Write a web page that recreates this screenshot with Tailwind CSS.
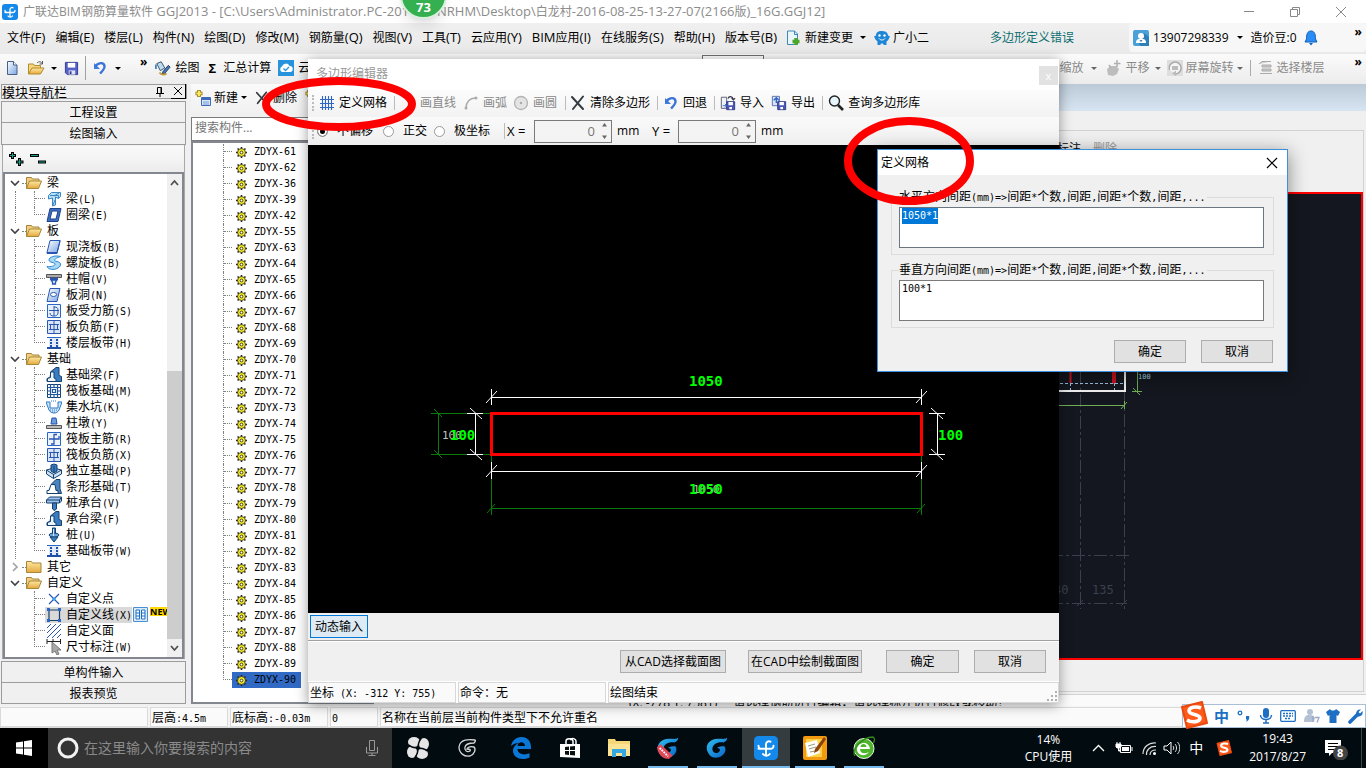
<!DOCTYPE html>
<html lang="zh-CN">
<head>
<meta charset="utf-8">
<title>广联达BIM钢筋算量软件 GGJ2013</title>
<script src="https://cdn.jsdelivr.net/npm/@tailwindcss/browser@4"></script>
</head>
<body class="h-screen overflow-hidden bg-[#f0f0f0] font-['Open_Sans','Noto_Sans_CJK_SC',sans-serif] text-[12px] leading-4 text-black">

<svg class="absolute size-0" aria-hidden="true">
  <defs>
    <linearGradient id="gb" x1="0" y1="0" x2="1" y2="1"><stop offset="0" stop-color="#fff"/><stop offset="1" stop-color="#7aa5e4"/></linearGradient>
    <linearGradient id="gf" x1="0" y1="0" x2="0" y2="1"><stop offset="0" stop-color="#ffe9a4"/><stop offset="1" stop-color="#e2a93c"/></linearGradient>
    <linearGradient id="gs" x1="0" y1="0" x2="1" y2="1"><stop offset="0" stop-color="#2fc0f0"/><stop offset="1" stop-color="#0a62c8"/></linearGradient>
  </defs>
  <symbol id="logo" viewBox="0 0 16 16"><rect width="16" height="16" rx="3" fill="#1489ea"/><path d="M8 13V5.500a2 2 0 0 1 3-1.700M3 8.500h8.500M3 6.500c0 2 1 2 2.500 2M13 6.500c0 2-1 2-2.500 2M6 12c1 1.500 3.500 1.500 4.500 0" stroke="#fff" stroke-width="1.300" fill="none" stroke-linecap="round"/></symbol>
  <symbol id="new" viewBox="0 0 16 16"><path d="M3.500 1.500h6l3.500 3.500v9.500h-9.500z" fill="url(#gb)" stroke="#4a5f86"/><path d="M9.500 1.500V5H13" fill="#fff" stroke="#4a5f86"/></symbol>
  <symbol id="open" viewBox="0 0 18 16"><path d="M1.500 14V4h5l1 1.500h6V8" fill="#f4d67c" stroke="#b58a2c"/><path d="M1.500 14L5 8h12l-3.500 6z" fill="url(#gf)" stroke="#b58a2c"/><path d="M10 3c2-2 4-1.500 5 .5M15.500 1v3h-3" fill="none" stroke="#555"/></symbol>
  <symbol id="save" viewBox="0 0 16 16"><path d="M1.500 1.500h13v13h-11l-2-2z" fill="#5561c4" stroke="#2e3890"/><path d="M4 2h8v5H4z" fill="#fff"/><path d="M5 10h7v4.500H5z" fill="#dfe3f5"/><path d="M6 11h2v3H6z" fill="#2e3890"/></symbol>
  <symbol id="undo" viewBox="0 0 16 16"><path d="M2 3v6h6" fill="#3f7be0"/><path d="M3 7c3-5 9-5 9.500-1 .4 3-2 5-4.500 7.500" fill="none" stroke="#3a74d8" stroke-width="2.400"/></symbol>
  <symbol id="pen" viewBox="0 0 18 18"><path d="M2 4l5-2 4 7-5 3z" fill="#b9dcf2" stroke="#345"/><path d="M1 5v5" stroke="#3a86c8" stroke-width="2"/><path d="M9 13l6-7 2 2-6 7-3 1z" fill="#3f78c8" stroke="#234"/><path d="M5 14c2 3 6 3 8 1" fill="none" stroke="#c49a3a" stroke-width="2"/></symbol>
  <symbol id="cloud" viewBox="0 0 16 16"><rect width="16" height="16" fill="#2793dc"/><path d="M4 12a3 3 0 0 1 0-5.500 4 4 0 0 1 7.500-.5A3 3 0 0 1 12 12z" fill="#fff"/><path d="M5.500 8.500l2 2 3.500-3.500" fill="none" stroke="#2793dc" stroke-width="1.300"/></symbol>
  <symbol id="doc" viewBox="0 0 16 16"><path d="M2.500 1h7l3 3v10.500h-10z" fill="#eaf5fc" stroke="#3b88b8"/><path d="M9.500 1v3.500h3" fill="none" stroke="#3b88b8"/><path d="M11 8v7M7.500 11.500h7" stroke="#49a52c" stroke-width="3.400"/></symbol>
  <symbol id="robot" viewBox="0 0 16 16"><path d="M8 1c5 0 6 3 6 4.500l2 1-1.500 3c-1 1.500-2 2-2 2V15h-2.500l-2-2-2 2H3.500v-3.500l-2-2L0 6.500l2-1C2 3 3.500 1 8 1z" fill="#1d86d6"/><circle cx="5.500" cy="5.500" r="1.200" fill="#fff"/><circle cx="10.500" cy="5.500" r="1.200" fill="#fff"/><path d="M5 8.500c1.500 2 4.500 2 6 0" stroke="#fff" fill="none"/></symbol>
  <symbol id="user" viewBox="0 0 16 16"><rect width="16" height="16" rx="2" fill="#4aa0d8"/><path d="M16 7l-5-4-5 11 2 2h8z" fill="#2f7fb8"/><circle cx="8" cy="6" r="3" fill="#fff"/><path d="M3 13c0-4 2-4 5-4s5 0 5 4z" fill="#fff"/><path d="M7 10l1 1.500 1-1.500" stroke="#2a6fa6" fill="none"/></symbol>
  <symbol id="bell" viewBox="0 0 14 16"><path d="M7 1c4 0 4.500 4 4.500 8l1.500 3H1l1.500-3C2.500 5 3 1 7 1z" fill="#2a8cf5" stroke="#1363b8"/><path d="M5 13h4l-2 2.500z" fill="#1363b8"/></symbol>
  <symbol id="addc" viewBox="0 0 16 16"><path d="M4 0v7M.5 3.500h7" stroke="#8c7a1e" stroke-width="3.600"/><path d="M4 .8v5.400M1.300 3.500h5.400" stroke="#ffe65c" stroke-width="2"/><path d="M6.500 7.500h9v8h-9z" fill="#dbe9fa" stroke="#3c6cb8"/><path d="M6.500 8h9v2h-9z" fill="#3c6cb8"/><path d="M8 12h6M8 14h6" stroke="#6c9ad8"/></symbol>
  <symbol id="del" viewBox="0 0 16 16"><path d="M2 2l11 12M13 1.500L3 14" stroke="#333a40" stroke-width="2" stroke-linecap="round"/></symbol>
  <symbol id="grid" viewBox="0 0 16 16"><path d="M3.500 1v14M6.500 1v14M9.500 1v14M12.500 1v14M1 4.500h14M1 8.500h14M1 12.500h14" stroke="#2f66c4" stroke-width="1.100" fill="none"/></symbol>
  <symbol id="arc" viewBox="0 0 16 16"><path d="M3 13C3 7 7 3 12 3" stroke="#aaa" stroke-width="1.500" fill="none"/><circle cx="3" cy="13" r="1.500" fill="#aaa"/><circle cx="13" cy="3" r="1.500" fill="#aaa"/></symbol>
  <symbol id="circ" viewBox="0 0 16 16"><circle cx="8" cy="8" r="6.500" fill="#e4e4e4" stroke="#b4b4b4" stroke-width="1.300"/><circle cx="8" cy="8" r="1.200" fill="#aaa"/></symbol>
  <symbol id="imp" viewBox="0 0 18 18"><path d="M1.500 2.500h6V15h-6z" fill="#eef3fb" stroke="#556"/><path d="M7.500 7.500h9v9h-9z" fill="#4a58b8" stroke="#2a3580"/><path d="M9.500 8h5v3.500h-5zM10.500 13.500h3V16h-3z" fill="#fff"/><path d="M9 4c1-3 5-3 6 1M13 3.500l2 2 2-2" stroke="#334" fill="none" stroke-width="1.300"/><path d="M3 12h4M5.500 10l2 2-2 2" stroke="#2f66c4" fill="none"/></symbol>
  <symbol id="exp" viewBox="0 0 18 18"><path d="M1.500 1.500h8V12h-8z" fill="#d8e4f8" stroke="#5668a8"/><path d="M7.500 7.500h9v9h-9z" fill="#4a58b8" stroke="#2a3580"/><path d="M9.500 8h5v3.500h-5zM10.500 13.500h3V16h-3z" fill="#fff"/><path d="M3 6l3-3 3 3M6 3v6" stroke="#2f66c4" fill="none" stroke-width="1.500"/></symbol>
  <symbol id="find" viewBox="0 0 16 16"><circle cx="6.500" cy="6" r="5" fill="#e6f6fc" stroke="#222" stroke-width="1.400"/><path d="M10 10l5 5" stroke="#222" stroke-width="2.600"/></symbol>
  <symbol id="hand" viewBox="0 0 16 16"><path d="M2 9l4-3h5l3 3-2 5-4 2-5-1z" fill="#bdbdbd"/><path d="M12 0v7M9 3.500h6.500M4 5l2 3" stroke="#b0b0b0" stroke-width="1.500"/></symbol>
  <symbol id="rot" viewBox="0 0 16 16"><rect width="16" height="16" fill="#dedede"/><path d="M2.500 10a6 6 0 1 1 6 4" stroke="#aaa" fill="#f4f4f4" stroke-width="1.500"/><path d="M9 10.500v5.500l-4-2.500zM5 6h6v4H5z" fill="#bbb"/></symbol>
  <symbol id="flr" viewBox="0 0 16 16"><path d="M1 4l3-2.500h9M4 5h9v2H4zM4 9h9v2H4zM2 13.500h12" stroke="#aaa" fill="#ccc"/></symbol>
  <symbol id="folder" viewBox="0 0 16 16"><path d="M.5 13.500V2.500h5l1 1.500h6.500v2" fill="#efd080" stroke="#a8853a"/><path d="M.5 13.500l3-7.500h12l-3 7.500z" fill="url(#gf)" stroke="#a8853a"/></symbol>
  <symbol id="folderc" viewBox="0 0 16 16"><path d="M.5 13.500V2.500h5l1 1.500h8.500v9.500z" fill="url(#gf)" stroke="#a8853a"/></symbol>
  <symbol id="t-beam" viewBox="0 0 16 16"><path d="M2.500 4.500l3-3h9v4l-2 2-3-1.500v8l-3 1v-8L2.500 8z" fill="#b8e0f6" stroke="#3a86c4"/><path d="M4 4.500h8.500v3M8 5l5-3M9 9l-2 5" stroke="#3a86c4" fill="none"/></symbol>
  <symbol id="t-ring" viewBox="0 0 16 16"><path d="M4 1.500h11l-3 13H1z" fill="#3a70c4" stroke="#1f3f88"/><path d="M6 4h6l-2 8H4z" fill="#fff" stroke="#1f3f88"/></symbol>
  <symbol id="t-slab" viewBox="0 0 16 16"><path d="M4 1.500h10l-3 12H1z" fill="url(#gb)" stroke="#2a56b0"/><path d="M14 1.500v1l-3 12H1v-1" stroke="#2a56b0" fill="none"/></symbol>
  <symbol id="t-spiral" viewBox="0 0 16 16"><path d="M14.500 1.500C9 0 3 2 3 5s6 2 6 4-4 3-8 2.500c1 3 7 4 11 1.500s3-6-1-6.500-3-3 3.500-5z" fill="#a8d8f6" stroke="#2f86d0"/></symbol>
  <symbol id="t-cap" viewBox="0 0 16 16"><path d="M.5 3.500h15v3H.5z" fill="#aaa" stroke="#555"/><path d="M4 7.500h8M5 9h6l-1.500 2v2h-3v-2z" fill="#d6e6fa" stroke="#2a56b0" stroke-width="1.300"/></symbol>
  <symbol id="t-hole" viewBox="0 0 16 16"><path d="M4 1.500h10l-3 13H1z" fill="url(#gb)" stroke="#2a56b0"/><ellipse cx="7.500" cy="7.500" rx="3" ry="2" fill="#fff" stroke="#2a56b0"/></symbol>
  <symbol id="t-bar1" viewBox="0 0 16 16"><path d="M1.500 1.500h13v13h-13z" fill="#e6effc" stroke="#2a66c4"/><path d="M8 3v10c-3 0-4-1-4-3M3 7.500h10M8 4c3 0 4 1 4 3v3c0 2-2 3-4 3" stroke="#2a56b0" fill="none"/></symbol>
  <symbol id="t-bar2" viewBox="0 0 16 16"><path d="M1.500 1.500h13v13h-13z" fill="#d8e6fa" stroke="#2a56b0"/><path d="M8 2v13M3 5.500h10M4.500 5v6M11.500 5v6M3 10.500h10" stroke="#2a56b0" fill="none"/></symbol>
  <symbol id="t-band" viewBox="0 0 16 16"><path d="M3 3h10v10H3z" fill="#e0ecfa"/><path d="M1 2.500h14" stroke="#2a66c4"/><path d="M1 13h14" stroke="#1f4fa8" stroke-width="2"/><path d="M5 4v8M11 4v8" stroke="#1f4fa8" stroke-width="2" stroke-dasharray="2 1"/></symbol>
  <symbol id="t-fbeam" viewBox="0 0 16 16"><path d="M1 14.500v-3l3-1 1-6 5-4h3v8l2.500 1v5z" fill="#3b7cc0" stroke="#14406e"/><path d="M1.500 14.500v-3l3-1V5H8v6l2 1v2.500z" fill="#eaf4fc" stroke="#14406e"/></symbol>
  <symbol id="t-raft" viewBox="0 0 16 16"><path d="M1.500 1.500h13v13h-13z" fill="#fff" stroke="#14406e"/><path d="M4.500 1v14M11.500 1v14M1 4.500h14M1 11.500h14M6.500 6.500h3v3h-3zM8 1v3M8 12v3M1 8h3M12 8h3" stroke="#1f56a0" fill="none" stroke-width="1.200"/></symbol>
  <symbol id="t-pit" viewBox="0 0 16 16"><path d="M0 3h4v6h8V3h4l-3 8c-2 4-8 4-10 0z" fill="#cfe6fa" stroke="#2a76c4"/><path d="M4 11h8M6 13h4M5 2h6" stroke="#2a76c4" stroke-dasharray="1 1"/></symbol>
  <symbol id="t-pier" viewBox="0 0 16 16"><path d="M5 9l1-6h4l1 6z" fill="#6b9ce0" stroke="#1f4fa8"/><path d="M.5 10.500h15v3H.5z" fill="#bbb" stroke="#555"/></symbol>
  <symbol id="t-main" viewBox="0 0 16 16"><path d="M1.500 1.500h13v13h-13z" fill="#eaf2fc" stroke="#2a66c4"/><path d="M8 3v10H5M3 8h10V5M8 3.500h3" stroke="#2a56b0" fill="none" stroke-width="1.300"/></symbol>
  <symbol id="t-ind" viewBox="0 0 16 16"><path d="M.5 7l7-2 8 2v4l-8 4.500L.5 11z" fill="#cfe2f6" stroke="#14406e"/><path d="M5 2l3-1 3 1v6l-3 2-3-2z" fill="#3b7cc0" stroke="#14406e"/><path d="M.5 7l7 4.500 8-4.500M7.500 11.500v4M8 3v6" fill="none" stroke="#14406e"/></symbol>
  <symbol id="t-strip" viewBox="0 0 16 16"><path d="M1 14.500l3-5h1l1-5 4-4h4v9l1.500 5z" fill="#4c84c0" stroke="#14406e"/><path d="M1 14.500v-3h2l2-6h4l1 6h2v3z" fill="#fff" stroke="#14406e"/></symbol>
  <symbol id="t-pcap" viewBox="0 0 16 16"><path d="M.5 5l3-3h12v4l-2 2H.5z" fill="#9cc4ec" stroke="#14406e"/><path d="M6.500 8h4v6l-2 1.500-2-1.500z" fill="#3b7cc0" stroke="#14406e"/><path d="M.5 5h13v3M13.500 5l2-3" fill="none" stroke="#14406e"/></symbol>
  <symbol id="t-pile" viewBox="0 0 16 16"><path d="M6.500 1h3v9H12l-4 5-4-5h2.500z" fill="#3b7cc0" stroke="#14406e"/><ellipse cx="8" cy="8" rx="5" ry="2" fill="#6ba4dc" stroke="#14406e"/><path d="M7.500 2v7" stroke="#cfe4fa"/></symbol>
  <symbol id="t-pt" viewBox="0 0 16 16"><path d="M3 3l10 10M13 3L3 13" stroke="#2a56b0" stroke-width="1.200"/><circle cx="8" cy="8" r="1.800" fill="#3fa0f0"/></symbol>
  <symbol id="t-line" viewBox="0 0 16 16"><path d="M3 3h10.500v10.500H3z" fill="none" stroke="#14406e" stroke-width="1.200"/><path d="M1 1h3v3H1zM12 1h3v3h-3zM1 12h3v3H1zM12 12h3v3h-3z" fill="#2a66c4"/></symbol>
  <symbol id="t-face" viewBox="0 0 16 16"><path d="M1 5l4-4M1 10l9-9M1 15L15 1M6 15l9-9M11 15l4-4" stroke="#2a56b0" fill="none"/></symbol>
  <symbol id="t-dim" viewBox="0 0 16 16"><path d="M1 0v5M14.500 0v5M1 2.500h13.500M7 0v3" stroke="#222"/><path d="M6 3v11l3-2 2 4 2-1-2-4h4z" fill="#aaa" stroke="#777"/></symbol>
  <symbol id="gear" viewBox="0 0 12 12"><path d="M6 0v12M0 6h12M1.700 1.700l8.600 8.600M10.300 1.700l-8.600 8.600" stroke="#222" stroke-width="1.700"/><circle cx="6" cy="6" r="4.300" fill="#f4ea20" stroke="#222" stroke-width=".8"/><circle cx="6" cy="6" r="1.500" fill="#fff" stroke="#222" stroke-width=".9"/></symbol>
  <symbol id="sogou" viewBox="0 0 28 28"><path d="M2 6l20-5 5 21-20 5z" fill="#ff5a1a" stroke="#e84a10" stroke-linejoin="round" stroke-width="2"/><path d="M21 7c-5-2-12-1-12 3s11 3 11 7-8 5-13 2" fill="none" stroke="#fff" stroke-width="3.600"/></symbol>
  <symbol id="gld" viewBox="0 0 26 26"><path d="M24 2c-3 2-5 1-8 1C8 2 1 7 2 14c1 7 7 11 13 9 6-2 9-8 6-12-3 0-6 0-8 2 2 0 4 1 3 3-2 4-8 3-8-2s6-8 12-7c3-1 4-3 4-5z" fill="url(#gs)"/></symbol>
</svg>

<div class="relative flex h-full flex-col overflow-hidden">

  <header class="flex h-[23px] shrink-0 items-center bg-white pl-[2px] text-[#8c8c8c]">
    <svg class="mr-[5px] size-4"><use href="#logo"/></svg>
    <span class="w-[414px] overflow-hidden whitespace-nowrap">广联达BIM钢筋算量软件<span class="text-[13px]"> GGJ2013 - [C:\Users\Administrator.PC-2014</span></span>
    <span class="whitespace-nowrap"><span class="text-[13px]">NRHM\Desktop\</span>白龙村<span class="text-[13px]">-2016-08-25-13-27-07(2166</span>版<span class="text-[13px]">)_16G.GGJ12]</span></span>
    <div class="ml-auto flex items-center gap-[34px] pr-[19px]">
      <button aria-label="最小化"><svg class="size-3" viewBox="0 0 12 12"><path d="M1 5.500h10" stroke="#888"/></svg></button>
      <button aria-label="还原"><svg class="size-3" viewBox="0 0 12 12"><path d="M1.500 3.500h7v7h-7zM3.500 3.500v-2h7v7h-2" fill="none" stroke="#888"/></svg></button>
      <button aria-label="关闭"><svg class="size-3" viewBox="0 0 12 12"><path d="M1 1l10 10M11 1L1 11" stroke="#888"/></svg></button>
    </div>
  </header>

  <nav class="flex h-[31px] shrink-0 items-center bg-linear-to-b from-[#f0f0f0] to-[#e9e9e9] pb-[2px] pl-[7px] whitespace-nowrap">
    <div id="menu" class="flex gap-[10px]"></div>
    <button class="ml-[8px] flex items-center gap-1"><svg class="size-4"><use href="#doc"/></svg>新建变更<span class="ml-[3px] border-x-[3px] border-t-[3px] border-x-transparent border-t-black"></span></button>
    <button class="ml-[8px] flex items-center gap-[3px]"><svg class="size-4"><use href="#robot"/></svg>广小二</button>
    <div class="ml-auto flex h-[29px] items-center">
      <span class="mr-[55px] text-[#0c6e70]">多边形定义错误</span>
      <div class="flex h-full items-center rounded bg-[#f7f7f7] pl-1">
        <svg class="size-4"><use href="#user"/></svg><span class="ml-1">13907298339</span>
        <span class="mx-2 border-x-[3px] border-t-[3px] border-x-transparent border-t-black"></span>
        <span>造价豆:0</span><svg class="ml-[7px] h-4 w-[14px]"><use href="#bell"/></svg>
        <span class="mr-1 ml-[37px] -mt-3 font-bold">»</span>
      </div>
    </div>
  </nav>

  <div class="flex h-[30px] shrink-0 items-center bg-linear-to-b from-[#fbfbfb] to-[#ececec] pb-[2px] pl-[4px] whitespace-nowrap">
    <button aria-label="新建"><svg class="size-4"><use href="#new"/></svg></button>
    <button aria-label="打开" class="ml-[7px] flex items-center gap-[6px]"><svg class="h-4 w-[18px]"><use href="#open"/></svg><span class="border-x-[3px] border-t-[3px] border-x-transparent border-t-black"></span></button>
    <button aria-label="保存" class="ml-[7px]"><svg class="size-[15px]"><use href="#save"/></svg></button>
    <span class="mx-[6px] h-6 w-px bg-[#a0a0a0]"></span>
    <button aria-label="撤销" class="flex items-center gap-[7px]"><svg class="size-4"><use href="#undo"/></svg><span class="border-x-[3px] border-t-[3px] border-x-transparent border-t-black"></span></button>
    <span class="ml-[19px] -mt-3 font-bold">»</span>
    <button class="ml-[8px] flex items-center gap-1"><svg class="size-4"><use href="#pen"/></svg>绘图</button>
    <button class="ml-[9px] flex items-center gap-[7px]"><b class="text-[13px]">Σ</b>汇总计算</button>
    <button class="ml-[7px] flex items-center gap-1"><svg class="size-4"><use href="#cloud"/></svg>云检查</button>
    <select aria-label="楼层" class="ml-[368px] h-[26px] w-[62px] appearance-none border border-[#707070] bg-white"></select>
    <span class="ml-auto"></span>
    <div class="flex items-center text-[#8a8a8a]">
      <button class="flex items-center gap-[7px]">缩放<span class="border-x-[3px] border-t-[3px] border-x-transparent border-t-[#666]"></span></button>
      <button class="ml-2 flex items-center gap-[5px]"><svg class="size-4"><use href="#hand"/></svg>平移<span class="border-x-[3px] border-t-[3px] border-x-transparent border-t-[#666]"></span></button>
      <button class="ml-[6px] flex items-center gap-[3px]"><svg class="size-4"><use href="#rot"/></svg>屏幕旋转<span class="border-x-[3px] border-t-[3px] border-x-transparent border-t-[#666]"></span></button>
      <span class="mx-[7px] h-4 w-px bg-[#aaa]"></span>
      <button class="flex items-center gap-[3px]"><svg class="size-4"><use href="#flr"/></svg>选择楼层</button>
      <span class="mr-1 ml-[30px] -mt-3 font-bold text-black">»</span>
    </div>
  </div>

  <main class="flex min-h-0 flex-1">
    <aside class="flex w-[187px] shrink-0 flex-col pb-[2px]">
      <div class="ml-px flex h-[15px] items-center border border-[#9a9a9a] text-[13px]">
        <h2>模块导航栏</h2>
        <button aria-label="固定" class="ml-auto"><svg class="size-[10px]" viewBox="0 0 10 10"><path d="M2.500 6V.5h4V6M6 1v5M1 6.500h8M5 7v3" stroke="#000" fill="none"/></svg></button>
        <button aria-label="关闭" class="ml-[6px] border-r border-b border-black p-[2px]"><svg class="size-[10px]" viewBox="0 0 10 10"><path d="M1 1l8 8M9 1L1 9" stroke="#000"/></svg></button>
      </div>
      <button class="mt-[2px] ml-px h-[22px] w-[185px] border border-[#9c9c9c] pt-px">工程设置</button>
      <button class="-mt-px ml-px h-[23px] w-[185px] border border-[#9c9c9c]">绘图输入</button>
      <div class="ml-[2px] flex min-h-0 w-[183px] flex-1 flex-col border-x border-[#a8a8a8]">
        <div class="mt-px flex h-[26px] items-center gap-[6px] bg-linear-to-b from-[#fafafa] to-[#ececec] pl-[5px]">
          <button aria-label="展开"><svg class="size-4" viewBox="0 0 16 16"><path d="M4.500 1v7M1 4.500h7M11.500 7v8M8 11h7.500" stroke="#000" stroke-width="3"/><path d="M4.500 2v5M2 4.500h5M11.500 8v6M9 11h5.500" stroke="#18a090"/></svg></button>
          <button aria-label="折叠"><svg class="size-4" viewBox="0 0 16 16"><path d="M0 4.500h9M8 11h8" stroke="#000" stroke-width="3"/><path d="M1 4.500h7M9 11h6" stroke="#18a090"/></svg></button>
        </div>
        <div class="flex min-h-0 flex-1 border-2 border-[#828790] bg-white">
          <ul id="tree" class="min-w-0 flex-1 overflow-hidden pt-px whitespace-nowrap"></ul>
          <div class="flex w-[15px] flex-col items-center bg-[#f0f0f0]">
            <svg class="mt-[5px] h-2 w-[9px]" viewBox="0 0 9 8"><path d="M1 6l3.500-4L8 6" fill="none" stroke="#505050" stroke-width="1.800"/></svg>
            <div class="mt-[184px] w-full flex-1 bg-[#cdcdcd]"></div>
            <svg class="my-[5px] h-2 w-[9px]" viewBox="0 0 9 8"><path d="M1 2l3.500 4L8 2" fill="none" stroke="#505050" stroke-width="1.800"/></svg>
          </div>
        </div>
      </div>
      <button class="mt-[2px] ml-px h-[22px] w-[185px] border border-[#9c9c9c] pt-px">单构件输入</button>
      <button class="-mt-px ml-px h-[22px] w-[185px] border border-[#9c9c9c] pt-px">报表预览</button>
    </aside>

    <section class="ml-1 flex w-[183px] shrink-0 flex-col pb-[2px]">
      <div class="flex h-[31px] items-center bg-linear-to-b from-[#fafafa] to-[#f0f0f0] pb-1 pl-1 whitespace-nowrap">
        <button class="flex items-center gap-[3px]"><svg class="size-4"><use href="#addc"/></svg>新建<span class="border-x-[3px] border-t-[3px] border-x-transparent border-t-black"></span></button>
        <button class="ml-[8px] flex items-center gap-[4px]"><svg class="size-[14px]"><use href="#del"/></svg>删除</button>
        <button class="ml-2 flex items-center gap-1"><svg class="size-4"><use href="#addc"/></svg>复制</button>
      </div>
      <input aria-label="搜索构件" placeholder="搜索构件..." class="mt-[2px] h-6 w-full border border-[#7a7a7a] bg-white pb-1 pl-[3px] placeholder:text-[#757575]">
      <ul id="list" class="min-h-0 flex-1 border-2 border-[#828790] bg-white pt-px whitespace-nowrap"></ul>
    </section>

    <section class="flex min-w-0 flex-1 flex-col">
      <div class="h-[29px] bg-linear-to-b from-[#bccad8] to-[#d7e4f1]"></div>
      <div class="h-[20px]"></div>
      <div class="mr-[2px] flex flex-1 flex-col border border-[#d2d2d2]">
        <div class="flex h-[61px] items-start gap-3 pt-[10px] pl-[682px]"><span>标注</span><span class="text-[#999]">删除</span></div>
        <div class="min-h-0 flex-1 overflow-hidden border-2 border-l-0 border-[#f00] bg-[#14171f]">
          <svg class="h-[464px] w-[990px]" viewBox="375 194 990 464">
            <g stroke="#3a414d" fill="none" stroke-dasharray="13 3 3 3"><path d="M1080.500 372v237M1124.500 392v217M1050 555.500h79M1050 603.500h77"/></g>
            <path d="M1077 606l6-6M1121 606l6-6" stroke="#3a414d"/>
            <path d="M1070.500 372v11" stroke="#d01820" stroke-width="2"/><path d="M1112 372h4v12h-4z" fill="#c8141c"/>
            <path d="M1050 383.500h74M1070.500 383v8M1114.500 383v8" stroke="#9cc0e4" stroke-dasharray="3 2" fill="none"/>
            <path d="M1050 391h75V372" stroke="#f0f0f0" stroke-width="2" fill="none"/>
            <path d="M1137.500 372v20M1132 391.500h10M1133 388l7 7M1050 405.500h74M1124.500 401v8M1121 409l6-7" stroke="#6fae54" fill="none"/>
            <g class="font-['DejaVu_Sans_Mono',monospace]"><text x="1138" y="379" font-size="7" fill="#a8d8e4">100</text>
            <text x="1092" y="594" font-size="12" fill="#3a414d">135</text><text x="1054" y="594" font-size="12" fill="#3a414d">40</text></g>
          </svg>
        </div>
        <div class="h-[31px]"></div>
      </div>
      <div class="mt-[2px] flex h-[13px] items-start gap-4 overflow-hidden border-t border-[#d2d2d2] bg-[#fafafa] pl-[255px] whitespace-nowrap"><span>(X: -778 Y: 7581)</span><span>请选择钢筋进行编辑；请选择标注进行修改或移动！</span></div>
    </section>
  </main>

  <footer class="flex h-[22px] shrink-0 items-center gap-[2px] border-b border-[#d8d8d8] bg-[#f4f4f4] whitespace-nowrap *:h-[20px] *:border *:border-[#dadada] *:bg-[#fafafa] *:px-px *:pt-[2px]">
    <div class="w-[148px]"></div>
    <div class="w-[78px]">层高<span class="font-['DejaVu_Sans_Mono',monospace] text-[10px]">:4.5m</span></div>
    <div class="w-[98px]">底标高<span class="font-['DejaVu_Sans_Mono',monospace] text-[10px]">:-0.03m</span></div>
    <div class="w-[48px]"><span class="font-['DejaVu_Sans_Mono',monospace] text-[10px]">0</span></div>
    <div class="flex-1">名称在当前层当前构件类型下不允许重名</div>
  </footer>

  <div class="flex h-10 shrink-0 bg-[#020b0f] text-white">
    <button aria-label="开始" class="flex w-12 items-center justify-center bg-black"><svg class="size-4" viewBox="0 0 16 16"><path d="M0 2.500l7-1v6H0zM8 1.300L16 0v7.500H8zM0 8.500h7v6l-7-1zM8 8.500h8V16l-8-1.300z" fill="#fff"/></svg></button>
    <label class="flex w-[344px] items-center bg-[#333] pl-2">
      <svg class="size-6" viewBox="0 0 24 24"><circle cx="12" cy="12" r="9" fill="none" stroke="#f2f2f2" stroke-width="3"/></svg>
      <input aria-label="搜索" placeholder="在这里输入你要搜索的内容" class="ml-1 min-w-0 flex-1 bg-transparent text-[14px] placeholder:text-[#8a8a8a]">
      <svg class="mr-[13px] h-[18px] w-[14px]" viewBox="0 0 14 18"><path d="M4.500 1.500h5v10h-5zM1.500 8v6h11V8M7 14v3M3.500 16.500h7" fill="none" stroke="#999"/></svg>
    </label>
    <div class="flex *:relative *:flex *:h-10 *:items-center *:justify-center">
      <button aria-label="应用" class="ml-[2px] w-12"><svg class="size-6" viewBox="0 0 24 24"><g fill="#e6e6e6"><ellipse cx="8" cy="6" rx="6" ry="5"/><ellipse cx="18" cy="8" rx="5" ry="6"/><ellipse cx="16" cy="18" rx="6" ry="5"/><ellipse cx="6" cy="16" rx="5" ry="6"/></g><path d="M12 12C8 12 5 11 3 9M12 12c0-4 1-7 3-9M12 12c4 0 7 1 9 3M12 12c0 4-1 7-3 9" stroke="#020b0f" stroke-width="1.500" fill="none"/></svg></button>
      <button aria-label="螺旋" class="w-[50px]"><svg class="size-5" viewBox="0 0 20 20"><path d="M18 2c-6-1-15-1-16 7 0 6 5 10 11 9 5-2 6-7 4-9-4-1-6 0-7 2 3 0 4 1 3 2-3 2-6-1-5-4 1-4 6-4 9-4 1-1 2-2 1-3z" fill="none" stroke="#d6d6d6" stroke-width="1.300"/></svg></button>
      <button aria-label="Edge" class="w-[58px]"><svg class="size-[22px]" viewBox="0 0 22 22"><path d="M1 9C2 3 7 0 11.500 0 18 0 21.500 5 21 12H7.500c0 5 7 7 12 4v4.500C12 24 3 21 3 14c0-4 3-7 6-8-3 0-6 1-8 3zm6.500 0H15c0-5-7-5-7.500 0z" fill="#0b78d8"/></svg></button>
      <button aria-label="商店" class="w-[40px]"><svg class="size-[22px]" viewBox="0 0 22 22"><path d="M1 7h20v14l-20-1z" fill="#fff"/><path d="M7 7V4c0-3 6-3 7 0v3M11 3c2-3 6-1 6 1v3" stroke="#fff" fill="none" stroke-width="1.500"/><path d="M6 10l4-.5V13H6zM11 9.500l5-.5v4h-5zM6 14h4v4l-4-.5zM11 14h5v4.500l-5-.5z" fill="#0a0f12"/></svg></button>
      <button aria-label="文件" class="w-[58px]"><svg class="size-[22px]" viewBox="0 0 22 20"><path d="M0 1h7l1 2h14v15H0z" fill="#f6d778"/><path d="M0 6h22v12H0z" fill="#fde394"/><path d="M4 19v-8h14v8h-4v-4H8v4z" fill="#35a8e4"/></svg></button>
      <button aria-label="广联达" class="w-10"><svg class="size-6" viewBox="0 0 26 26"><use href="#gld" width="26" height="26"/><path d="M1 12l4-3 13 12-4 4C7 25 2 20 1 12z" fill="#e04858"/><path d="M4 13l9 9" stroke="#fff" stroke-width="2" stroke-dasharray="2 1"/></svg><i class="absolute bottom-0 h-[2px] w-full bg-[#76b9ed]"></i></button>
      <button aria-label="广联达G" class="ml-[9px] w-10"><svg class="size-6"><use href="#gld"/></svg><i class="absolute bottom-0 h-[2px] w-full bg-[#76b9ed]"></i></button>
      <button aria-label="GGJ" class="ml-[5px] w-12 bg-[#343c40]"><svg class="size-6"><use href="#logo"/></svg><i class="absolute bottom-0 h-[2px] w-full bg-[#76b9ed]"></i></button>
      <button aria-label="笔记" class="ml-[5px] w-10"><svg class="size-6" viewBox="0 0 24 24"><rect width="24" height="24" rx="2" fill="#f49a10"/><path d="M3 3h16v18H3z" fill="#ffd24a"/><path d="M2 7l12-3 3 13-12 4z" fill="#fff"/><path d="M5 10l7-2M6 13l7-2M7 16l5-1" stroke="#997"/><path d="M21 1l-9 12-1 4 4-2 8-12z" fill="#8a4210"/></svg><i class="absolute bottom-0 h-[2px] w-full bg-[#76b9ed]"></i></button>
      <button aria-label="浏览器" class="ml-[9px] w-10"><svg class="size-6" viewBox="0 0 24 24"><circle cx="12" cy="12.500" r="10" fill="#4eb52c" stroke="#e8f6e0"/><path d="M18 13H8c0 5 5 5 9 3-3 5-12 4-12-3s12-9 13 0zM8.500 11h6c0-4-6-4-6 0z" fill="#fff"/><path d="M3 20C-1 14 10 1 21 1c2 1 2 4 0 6" stroke="#2d8a1a" fill="none" stroke-width="1.300"/></svg><i class="absolute bottom-0 h-[2px] w-full bg-[#76b9ed]"></i></button>
    </div>
    <div class="ml-auto flex items-center text-center">
      <div class="leading-[17px]">14%<br>CPU使用</div>
      <svg class="ml-5 size-[13px]" viewBox="0 0 13 13"><path d="M1 9l5.500-5.500L12 9" stroke="#fff" fill="none" stroke-width="1.300"/></svg>
      <svg class="ml-[10px] h-4 w-[18px]" viewBox="0 0 18 16"><path d="M5.500 5.500h10v7h-10zM17 7v4" fill="none" stroke="#fff"/><path d="M7 7h7v4H7z" fill="#fff"/><path d="M1 4h5v3l-1 1H2L1 7zM2 4V2M5 4V2M3.500 8v3h2" fill="#fff" stroke="#fff"/></svg>
      <svg class="ml-[9px] size-[15px]" viewBox="0 0 15 15"><g fill="none" stroke="#ddd" stroke-width="1.200"><path d="M1 13C1 6 7 1 14 2M4.500 14C4 9 8 5 14 5.500M8 14c0-3 2-5 6-5"/></g><circle cx="12.500" cy="12.500" r="1.500" fill="#fff"/></svg>
      <svg class="ml-[6px] h-[14px] w-[17px]" viewBox="0 0 17 14"><path d="M1 5h3l4-4v12L4 9H1z" fill="none" stroke="#fff"/><path d="M10 5c1 1 1 3 0 4M12 3c2 2 2 6 0 8M14.500 1c3 3 3 9 0 12" stroke="#ddd" fill="none"/></svg>
      <span class="ml-[9px] text-[14px]">中</span>
      <svg class="ml-[13px] size-4"><use href="#sogou"/></svg>
      <div class="ml-[17px] leading-[18px]">19:43<br>2017/8/27</div>
      <div class="relative mr-[12px] ml-[19px] size-6"><svg class="size-6" viewBox="0 0 24 24"><path d="M0 4h16v13h-9l-3 3v-3H0z" fill="#fff"/><path d="M3 7.500h10M3 10.500h10M3 13.500h6" stroke="#000"/><circle cx="15.500" cy="17" r="7.500" fill="#444"/></svg><span class="absolute top-[9px] left-3 text-[11px] font-bold">8</span></div>
      <div class="h-10 w-[5px] border-l border-[#444]"></div>
    </div>
  </div>

  <!-- input method bar -->
  <div class="absolute right-0 bottom-10 flex h-6 w-[184px] items-center border border-[#a8bfd6] bg-white pl-[31px] text-[#1d6fc4]">
    <svg class="absolute -top-[4px] -left-[3px] size-7"><use href="#sogou"/></svg>
    <b class="text-[15px]">中</b>
    <svg class="ml-2 size-[14px]" viewBox="0 0 14 14"><circle cx="3" cy="4" r="1.800" fill="none" stroke="#1d6fc4" stroke-width="1.300"/><path d="M9 7h3c1 3-1 5-3 6 1-2 1-2 0-3z" fill="#1d6fc4"/></svg>
    <svg class="ml-2 h-4 w-[14px]" viewBox="0 0 14 16"><rect x="4" y="0" width="6" height="10" rx="3" fill="#1d6fc4"/><path d="M1.500 7c0 6 11 6 11 0M7 12v3M4 15h6" stroke="#1d6fc4" stroke-width="1.500" fill="none"/></svg>
    <svg class="ml-[7px] h-3 w-4" viewBox="0 0 16 12"><rect x=".7" y=".7" width="14.600" height="10.600" rx="1" fill="none" stroke="#1d6fc4" stroke-width="1.300"/><path d="M3 3.500h10M3 6h10M5 8.500h6" stroke="#1d6fc4" stroke-width="1.500" stroke-dasharray="2 1"/></svg>
    <svg class="ml-2 size-4" viewBox="0 0 16 16"><circle cx="6" cy="4" r="3" fill="#b4c0d4"/><path d="M0 14c0-7 3-7 6-7s4 1 5 3l-1 4z" fill="#b4c0d4"/><path d="M8 10l1-1v5M11 9.500h4l-2 5" stroke="#9aa8c0" stroke-width="1.300" fill="none"/></svg>
    <svg class="ml-[6px] h-[14px] w-[14px]" viewBox="0 0 14 14"><path d="M4 0c1 2 5 2 6 0l4 3-2 4-1.500-1V14h-7V6L2 7 0 3z" fill="#1d6fc4"/></svg>
    <svg class="ml-2 size-[15px]" viewBox="0 0 15 15"><path d="M2 13l7-7" stroke="#1d6fc4" stroke-width="3.600" stroke-linecap="round"/><path d="M8 5c0-3 2-5 5-4.500L10.500 3l1.500 1.500L14.500 2c1 4-2 6-5 5.500z" fill="#1d6fc4"/></svg>
  </div>

  <!-- floating speed ball -->
  <div class="absolute -top-7 left-[400px] flex size-[47px] items-end justify-center rounded-full border-2 border-[#d8f0dc] bg-[#34b050] pb-[2px] text-[13px] font-bold text-white shadow-lg">73</div>

  <!-- polygon editor -->
  <section role="dialog" aria-label="多边形编辑器" class="absolute top-[59px] left-[308px] flex h-[644px] w-[751px] flex-col bg-[#f0f0f0] shadow-[0_2px_12px_rgba(0,0,0,0.4)]">
    <div class="flex h-[30px] items-center bg-white pl-2 text-[#999]"><h1>多边形编辑器</h1><button class="mt-[3px] mr-px ml-auto h-[19px] w-[19px] bg-[#e2e2e2] text-[11px] text-white">x</button></div>
    <div class="flex h-[28px] items-center bg-linear-to-b from-[#fdfdfd] to-[#f2f2f2] pl-[4px] whitespace-nowrap">
      <span class="mr-[5px] h-4 border-l-2 border-dotted border-[#bbb]"></span>
      <button class="flex items-center gap-1"><svg class="size-4"><use href="#grid"/></svg>定义网格</button>
      <span class="ml-[7px] h-[14px] w-px bg-[#bbb]"></span>
      <button class="ml-[5px] flex items-center gap-1 text-[#888]"><svg class="size-4" viewBox="0 0 16 16"><path d="M4 2l9 10" stroke="#bbb"/></svg>画直线</button>
      <button class="ml-[7px] flex items-center gap-1 text-[#888]"><svg class="size-4"><use href="#arc"/></svg>画弧</button>
      <button class="ml-[6px] flex items-center gap-1 text-[#888]"><svg class="size-4"><use href="#circ"/></svg>画圆</button>
      <span class="ml-[8px] h-[14px] w-px bg-[#bbb]"></span>
      <button class="ml-[4px] flex items-center gap-1"><svg class="size-4"><use href="#del"/></svg>清除多边形</button>
      <span class="ml-[7px] h-[14px] w-px bg-[#bbb]"></span>
      <button class="ml-[5px] flex items-center gap-1"><svg class="size-4"><use href="#undo"/></svg>回退</button>
      <span class="ml-[7px] h-[14px] w-px bg-[#bbb]"></span>
      <button class="ml-[5px] flex items-center gap-1"><svg class="size-4"><use href="#imp"/></svg>导入</button>
      <button class="ml-[7px] flex items-center gap-1"><svg class="size-4"><use href="#exp"/></svg>导出</button>
      <span class="ml-[7px] h-[14px] w-px bg-[#bbb]"></span>
      <button class="ml-[5px] flex items-center gap-1"><svg class="size-4"><use href="#find"/></svg>查询多边形库</button>
    </div>
    <div class="flex h-[28px] items-center bg-linear-to-b from-[#fafafa] to-[#efefef] pl-[4px] whitespace-nowrap">
      <span class="mr-[3px] h-4 border-l-2 border-dotted border-[#bbb]"></span>
      <label class="flex items-center gap-[9px]"><input type="radio" name="off" checked class="size-[11px] appearance-none rounded-full border border-[#999] bg-white checked:bg-black checked:shadow-[inset_0_0_0_2px_#fff]">不偏移</label>
      <label class="ml-[10px] flex items-center gap-[9px]"><input type="radio" name="off" class="size-[11px] appearance-none rounded-full border border-[#999] bg-white">正交</label>
      <label class="ml-[7px] flex items-center gap-[9px]"><input type="radio" name="off" class="size-[11px] appearance-none rounded-full border border-[#999] bg-white">极坐标</label>
      <span class="ml-[14px] h-4 w-px bg-[#bbb]"></span>
      <label for="ox" class="ml-[2px] w-[27px] text-[13px]">X =</label>
      <div class="flex h-[23px] w-[78px] items-center border border-[#7a7a7a] bg-[#f4f4f4]"><input id="ox" value="0" class="w-[60px] bg-transparent text-right text-[13px] text-[#777]"><svg class="ml-[7px] h-4 w-[5px]" viewBox="0 0 5 16"><path d="M0 3.500L2.500 0 5 3.500zM0 12.500h5L2.500 16z" fill="#666"/></svg></div>
      <span class="ml-[5px] w-[35px]">mm</span>
      <label for="oy" class="w-[26px] text-[13px]">Y =</label>
      <div class="flex h-[23px] w-[78px] items-center border border-[#7a7a7a] bg-[#f4f4f4]"><input id="oy" value="0" class="w-[60px] bg-transparent text-right text-[13px] text-[#777]"><svg class="ml-[7px] h-4 w-[5px]" viewBox="0 0 5 16"><path d="M0 3.500L2.500 0 5 3.500zM0 12.500h5L2.500 16z" fill="#666"/></svg></div>
      <span class="ml-[5px]">mm</span>
    </div>
    <div class="min-h-0 flex-1 bg-black">
      <svg class="h-full w-full" viewBox="308 145 751 468">
        <g stroke="#0a7a0a" fill="none"><path d="M431 413.500h60M431 454.500h60M438.500 413v42M434 409l8 8M434 450l8 8M491.500 456v59M921.500 456v59M491 508.500h431M487 513l8-9M917 513l8-9"/></g>
        <g stroke="#fff" fill="none"><path d="M491.500 389v16M921.500 389v16M491 397.500h431M486 403l11-12M916 403l11-12M491.500 462v17M921.500 462v17M491 471.500h431M486 477l11-12M916 477l11-12M475.500 413v42M467 413.500h16M467 454.500h16M470 408l12 11M470 449l12 11M937.500 413v42M929 413.500h16M929 454.500h16M931 408l12 11M931 449l12 11"/></g>
        <path d="M491.500 413.500h430v41h-430z" fill="none" stroke="#f00" stroke-width="3"/>
        <g class="font-['DejaVu_Sans_Mono',monospace]">
          <g font-size="11" fill="#c0c0c0"><text x="442" y="439">100</text><text x="693" y="493">1050</text></g>
          <g font-size="14" font-weight="bold" fill="#0f0"><text x="689" y="386">1050</text><text x="689" y="494">1050</text><text x="450" y="440">100</text><text x="938" y="440">100</text></g>
        </g>
      </svg>
    </div>
    <div class="flex h-[28px] items-center border-b border-[#a0a0a0] pl-[2px]"><button class="h-[23px] w-[58px] border border-[#0078d7] bg-[#deebf5]">动态输入</button></div>
    <div class="flex h-[41px] items-center border-t border-b border-white pr-[13px] *:h-[23px] *:border *:border-[#adadad] *:bg-[#e1e1e1]">
      <button class="ml-auto w-[106px]">从CAD选择截面图</button>
      <button class="ml-[22px] w-[114px]">在CAD中绘制截面图</button>
      <button class="ml-[24px] w-[73px]">确定</button>
      <button class="ml-[15px] w-[72px]">取消</button>
    </div>
    <div class="flex h-[21px] gap-[2px] bg-white *:border *:border-[#d8d8d8] *:bg-[#fafafa] *:pt-[2px] *:pl-px">
      <div class="w-[148px]">坐标<span class="font-['DejaVu_Sans_Mono',monospace] text-[10px]">&nbsp;(X: -312 Y: 755)</span></div>
      <div class="w-[148px]">命令：无</div>
      <div class="relative flex-1">绘图结束<svg class="absolute right-px bottom-px size-[10px]" viewBox="0 0 10 10"><path d="M8 0h2v2H8zM4 4h2v2H4zM8 4h2v2H8zM0 8h2v2H0zM4 8h2v2H4zM8 8h2v2H8z" fill="#b0b0b0"/></svg></div>
    </div>
  </section>

  <!-- grid definition dialog -->
  <form role="dialog" aria-label="定义网格" class="absolute top-[149px] left-[877px] w-[411px] border border-[#3d8fe0] bg-[#f0f0f0] pb-[8px] shadow-[0_4px_18px_rgba(0,0,0,0.45)]">
    <div class="flex h-[25px] items-center bg-white pr-[9px] pl-[3px]"><h1>定义网格</h1><button type="button" aria-label="关闭" class="ml-auto"><svg class="size-3" viewBox="0 0 12 12"><path d="M1 1l10 10M11 1L1 11" stroke="#000" stroke-width="1.200"/></svg></button></div>
    <fieldset class="mx-[13px] mt-[14px] h-[66px] border border-[#dcdcdc] px-[7px]">
      <legend class="pr-[2px] whitespace-nowrap"><label for="h">水平方向间距<span class="font-['DejaVu_Sans_Mono',monospace] text-[10px]">(mm)=&gt;</span>间距<span class="font-['DejaVu_Sans_Mono',monospace] text-[10px]">*</span>个数<span class="font-['DejaVu_Sans_Mono',monospace] text-[10px]">,</span>间距<span class="font-['DejaVu_Sans_Mono',monospace] text-[10px]">,</span>间距<span class="font-['DejaVu_Sans_Mono',monospace] text-[10px]">*</span>个数<span class="font-['DejaVu_Sans_Mono',monospace] text-[10px]">,</span>间距<span class="font-['DejaVu_Sans_Mono',monospace] text-[10px]">,...</span></label></legend>
      <textarea id="h" spellcheck="false" class="mt-px block h-[41px] w-[365px] resize-none border border-[#6b7681] bg-white px-[2px] font-['DejaVu_Sans_Mono',monospace] text-[10px] outline-none selection:bg-[#0078d7] selection:text-white">1050*1</textarea>
    </fieldset>
    <fieldset class="mx-[13px] mt-[7px] h-[66px] border border-[#dcdcdc] px-[7px]">
      <legend class="pr-[2px] whitespace-nowrap"><label for="v">垂直方向间距<span class="font-['DejaVu_Sans_Mono',monospace] text-[10px]">(mm)=&gt;</span>间距<span class="font-['DejaVu_Sans_Mono',monospace] text-[10px]">*</span>个数<span class="font-['DejaVu_Sans_Mono',monospace] text-[10px]">,</span>间距<span class="font-['DejaVu_Sans_Mono',monospace] text-[10px]">,</span>间距<span class="font-['DejaVu_Sans_Mono',monospace] text-[10px]">*</span>个数<span class="font-['DejaVu_Sans_Mono',monospace] text-[10px]">,</span>间距<span class="font-['DejaVu_Sans_Mono',monospace] text-[10px]">,...</span></label></legend>
      <textarea id="v" spellcheck="false" class="mt-px block h-[41px] w-[365px] resize-none border border-[#7a7a7a] bg-white px-[2px] font-['DejaVu_Sans_Mono',monospace] text-[10px] outline-none">100*1</textarea>
    </fieldset>
    <div class="mt-[12px] flex justify-end gap-[15px] pr-[14px]">
      <button type="button" class="h-[23px] w-[72px] border border-[#adadad] bg-[#e1e1e1]">确定</button>
      <button type="button" class="h-[23px] w-[72px] border border-[#adadad] bg-[#e1e1e1]">取消</button>
    </div>
  </form>

  <!-- pen marks -->
  <svg class="pointer-events-none absolute top-0 left-0 h-[768px] w-[1366px]" viewBox="0 0 1366 768" fill="none" stroke="#f00" stroke-width="8"><ellipse cx="339" cy="104" rx="73" ry="23"/><ellipse cx="909" cy="161" rx="61" ry="40"/></svg>
</div>

<script>
  const mono = (s) => s.replace(/\([A-Z]\)/, (m) => `<span class="font-['DejaVu_Sans_Mono',monospace] text-[10px]">${m}</span>`);
  document.getElementById('menu').innerHTML = ['文件(F)', '编辑(E)', '楼层(L)', '构件(N)', '绘图(D)', '修改(M)', '钢筋量(Q)', '视图(V)', '工具(T)', '云应用(Y)', 'BIM应用(I)', '在线服务(S)', '帮助(H)', '版本号(B)'].map((t) => `<button>${t.replace(/[A-Z()]+/g, '<span class="text-[13px]">$&</span>')}</button>`).join('');

  const groups = [
    ['梁', 1, [['beam', '梁(L)'], ['ring', '圈梁(E)']]],
    ['板', 1, [['slab', '现浇板(B)'], ['spiral', '螺旋板(B)'], ['cap', '柱帽(V)'], ['hole', '板洞(N)'], ['bar1', '板受力筋(S)'], ['bar2', '板负筋(F)'], ['band', '楼层板带(H)']]],
    ['基础', 1, [['fbeam', '基础梁(F)'], ['raft', '筏板基础(M)'], ['pit', '集水坑(K)'], ['pier', '柱墩(Y)'], ['main', '筏板主筋(R)'], ['bar2', '筏板负筋(X)'], ['ind', '独立基础(P)'], ['strip', '条形基础(T)'], ['pcap', '桩承台(V)'], ['fbeam', '承台梁(F)'], ['pile', '桩(U)'], ['band', '基础板带(W)']]],
    ['其它', 0, []],
    ['自定义', 1, [['pt', '自定义点'], ['line', '自定义线(X)'], ['face', '自定义面'], ['dim', '尺寸标注(W)']]],
  ];
  let html = '';
  groups.forEach(([name, open, items], g) => {
    html += `<li class="flex h-4 items-center pl-[4px]"><svg class="size-3 shrink-0" viewBox="0 0 12 12"><path d="${open ? 'M2 4l4 4 4-4' : 'M4 2l4 4-4 4'}" fill="none" stroke="${open ? '#404040' : '#a0a0a0'}" stroke-width="1.600"/></svg><span class="ml-px w-[4px] border-t border-dotted border-[#808080]"></span><svg class="size-4"><use href="#${open ? 'folder' : 'folderc'}"/></svg><span class="ml-[5px]">${name}</span></li>`;
    items.forEach(([ic, t], i) => {
      const last = i === items.length - 1, sel = t === '自定义线(X)';
      html += `<li class="flex h-4 pl-[10px]"><span class="${g < 4 ? 'w-[19px] shrink-0 border-l border-dotted border-[#808080]' : 'w-[19px] shrink-0'}"></span><span class="${last ? 'h-2 w-[11px] shrink-0 border-b border-l border-dotted border-[#808080]' : 'h-4 w-[11px] shrink-0 border-l border-dotted border-[#808080]'}">${last ? '' : '<span class="block h-2 border-b border-dotted border-[#808080]"></span>'}</span><span class="${sel ? 'flex shrink-0 items-center gap-1 bg-[#d9d9d9] pl-px' : 'flex shrink-0 items-center gap-1 pl-px'}"><svg class="size-4"><use href="#t-${ic}"/></svg><span>${mono(t)}</span></span>${sel ? '<svg class="ml-px h-4 w-[15px] shrink-0" viewBox="0 0 15 16"><path d="M.5.500h14v14H.5z" fill="#dcebf8" stroke="#4a90d0"/><path d="M3 3h3.500v9H3zM8.500 3H12v9H8.500zM3 6h3.500M8.500 6H12M3 9h3.500M8.500 9H12" fill="#fff" stroke="#1d6fc4"/></svg><b class="ml-[2px] h-[9px] shrink-0 bg-[#ffd800] text-[9px] leading-[9px]">NEW</b>' : ''}</li>`;
    });
  });
  document.getElementById('tree').innerHTML = html;

  const ids = [61, 62, 36, 39, 42, 55];
  for (let n = 63; n <= 90; n++) ids.push(n);
  document.getElementById('list').innerHTML = ids.map((n) => {
    const last = n === 90;
    return `<li class="flex h-4 pl-[30px]"><span class="${last ? 'h-2 w-[9px] border-b border-l border-dotted border-[#808080]' : 'h-4 w-[9px] border-l border-dotted border-[#808080]'}">${last ? '' : '<span class="block h-2 border-b border-dotted border-[#808080]"></span>'}</span><span class="${last ? 'flex w-[69px] items-center bg-[#316ac5] pl-[4px]' : 'flex w-[69px] items-center pl-[4px]'}"><svg class="mr-[7px] size-[11px]"><use href="#gear"/></svg><span class="font-['DejaVu_Sans_Mono',monospace] text-[10px]">ZDYX-${n}</span></span></li>`;
  }).join('');

  const field = document.getElementById('h');
  field.focus();
  field.select();
</script>
</body>
</html>
